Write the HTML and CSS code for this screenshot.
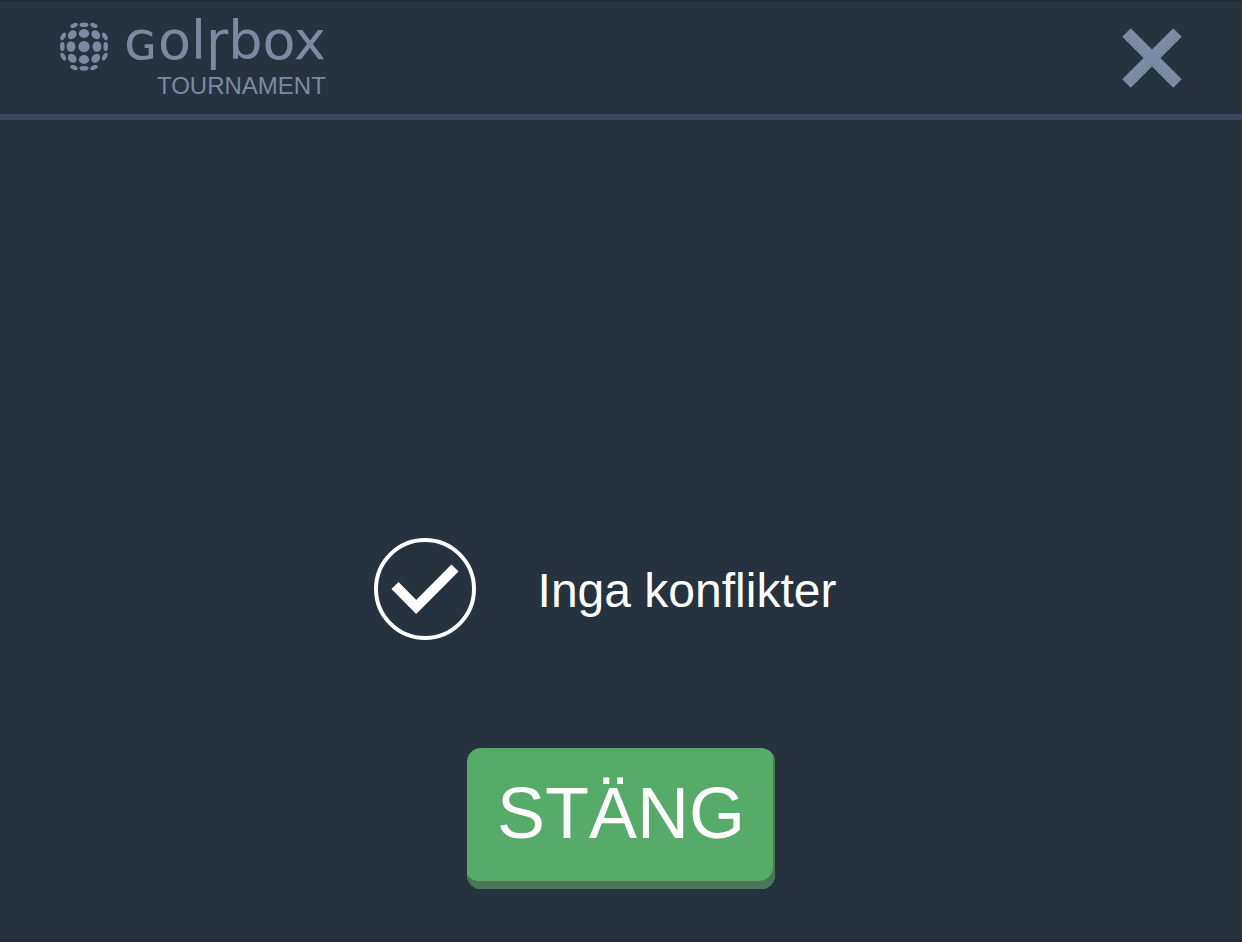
FILE: index.html
```html
<!DOCTYPE html>
<html lang="sv">
<head>
    <meta charset="UTF-8">
    <meta name="viewport" content="width=device-width, initial-scale=1.0">
    <title>GolfBox Tournament</title>
    <link rel="stylesheet" href="styles.css">
</head>
<body>
    <header class="header">
        <div class="brand">
            <svg class="brand-ball" viewBox="1 0 50 50" aria-hidden="true">
                <circle cx="25" cy="25.5" r="5.6"/>
                <ellipse cx="25" cy="12.5" rx="5.2" ry="4.4"/>
                <ellipse cx="25" cy="38.5" rx="5.2" ry="4.4"/>
                <ellipse cx="12" cy="25.5" rx="4.4" ry="5.2"/>
                <ellipse cx="38" cy="25.5" rx="4.4" ry="5.2"/>
                <ellipse cx="25" cy="3.8" rx="4.5" ry="2.3"/>
                <ellipse cx="25" cy="47.2" rx="4.5" ry="2.3"/>
                <ellipse cx="3.3" cy="25.5" rx="2.3" ry="4.5"/>
                <ellipse cx="46.7" cy="25.5" rx="2.3" ry="4.5"/>
                <ellipse cx="13.2" cy="13.7" rx="4.9" ry="3.9" transform="rotate(-45 13.2 13.7)"/>
                <ellipse cx="36.8" cy="13.7" rx="4.9" ry="3.9" transform="rotate(45 36.8 13.7)"/>
                <ellipse cx="13.2" cy="37.3" rx="4.9" ry="3.9" transform="rotate(45 13.2 37.3)"/>
                <ellipse cx="36.8" cy="37.3" rx="4.9" ry="3.9" transform="rotate(-45 36.8 37.3)"/>
                <ellipse cx="15" cy="4.4" rx="3.9" ry="2.2" transform="rotate(-24 15 4.4)"/>
                <ellipse cx="35" cy="4.4" rx="3.9" ry="2.2" transform="rotate(24 35 4.4)"/>
                <ellipse cx="15" cy="46.6" rx="3.9" ry="2.2" transform="rotate(24 15 46.6)"/>
                <ellipse cx="35" cy="46.6" rx="3.9" ry="2.2" transform="rotate(-24 35 46.6)"/>
                <ellipse cx="4.2" cy="15.4" rx="2.2" ry="4.2" transform="rotate(30 4.2 15.4)"/>
                <ellipse cx="45.8" cy="15.4" rx="2.2" ry="4.2" transform="rotate(-30 45.8 15.4)"/>
                <ellipse cx="4.2" cy="35.6" rx="2.2" ry="4.2" transform="rotate(-30 4.2 35.6)"/>
                <ellipse cx="45.8" cy="35.6" rx="2.2" ry="4.2" transform="rotate(30 45.8 35.6)"/>
            </svg>
            <div class="brand-text">
                <span class="brand-name">ɢolɼbox</span>
                <span class="brand-product">TOURNAMENT</span>
            </div>
        </div>
        <button type="button" class="close-icon" aria-label="Stäng fönstret">
            <svg viewBox="0 0 60 60" aria-hidden="true">
                <path d="M4.5 4.5 55.5 55.5M55.5 4.5 4.5 55.5"/>
            </svg>
        </button>
    </header>

    <main class="content">
        <div class="message" role="status">
            <svg class="message-icon" viewBox="0 0 102 102" aria-hidden="true">
                <circle cx="51" cy="51" r="49"/>
                <path d="M21 47.5 42.2 69 81 30"/>
            </svg>
            <p>Inga konflikter</p>
        </div>
        <button type="button" class="btn">STÄNG</button>
    </main>
</body>
</html>
```
FILE: styles.css
```css
:root {
    --background: #26323e;
    --line: #3a495b;
    --muted: #7a8ba1;
    --green: #57ab68;
    --green-dark: #4a7856;
}
* {
    box-sizing: border-box;
}
body {
    display: flex;
    flex-direction: column;
    min-height: 100vh;
    margin: 0;
    background-color: var(--background);
    border-top: 1px solid #1e2732;
    border-bottom: 2px solid #242936;
    color: #fff;
    font-family: "Liberation Sans", Arial, sans-serif;
}
.header {
    display: flex;
    justify-content: space-between;
    align-items: flex-start;
    height: 119px;
    padding: 20px 60px 0;
    border-bottom: 6px solid var(--line);
}
.brand {
    display: flex;
    align-items: flex-start;
    gap: 14px;
    color: var(--muted);
}
.brand-ball {
    width: 50px;
    height: 50px;
    fill: currentColor;
    overflow: visible;
}
.brand-text {
    display: flex;
    flex-direction: column;
    align-items: flex-end;
    gap: 12px;
}
.brand-name {
    font-family: "DejaVu Sans", sans-serif;
    font-size: 54px;
    line-height: 40px;
}
.brand-product {
    font-size: 24px;
    line-height: 26px;
}
.close-icon {
    width: 60px;
    height: 60px;
    margin-top: 7px;
    padding: 0;
    border: none;
    background: none;
    color: var(--muted);
    cursor: pointer;
}
.close-icon svg {
    display: block;
    fill: none;
    stroke: currentColor;
    stroke-width: 12;
}
.content {
    flex: 1;
    display: flex;
    flex-direction: column;
    align-items: center;
    justify-content: flex-end;
    gap: 108px;
    padding-bottom: 51px;
}
.message {
    display: flex;
    align-items: center;
    gap: 62px;
    margin-right: 32px;
}
.message p {
    margin: 0;
    padding-top: 4px;
    font-size: 48px;
    line-height: 56px;
}
.message-icon {
    width: 102px;
    height: 102px;
    fill: none;
    stroke: #fff;
    stroke-width: 4;
}
.message-icon path {
    stroke-width: 10;
}
.btn {
    padding: 25px 30px 36px;
    border: none;
    border-radius: 14px;
    background-color: var(--green);
    box-shadow: inset -2px -8px var(--green-dark);
    color: #fff;
    font-family: inherit;
    font-size: 72px;
    line-height: 80px;
    cursor: pointer;
}
```
